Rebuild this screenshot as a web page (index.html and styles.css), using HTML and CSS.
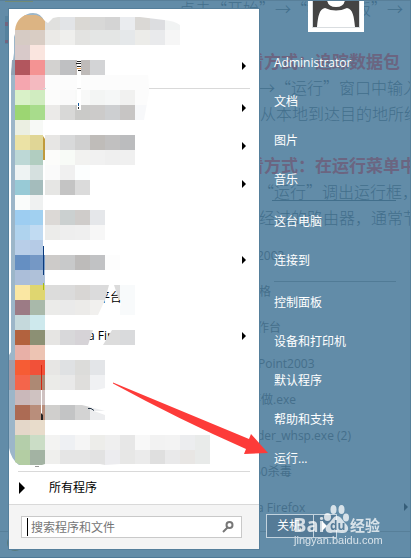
FILE: index.html
```html
<!DOCTYPE html>
<html lang="zh-CN">
<head>
<meta charset="utf-8">
<meta name="viewport" content="width=device-width, initial-scale=1">
<title>开始菜单</title>
<link rel="stylesheet" href="styles.css">
</head>
<body>
<div class="desktop">
  <svg class="backdrop" aria-hidden="true">
    <rect x="5" y="0" width="28" height="2" fill="#738b76"/>
    <g fill="#55829e"><rect x="5" y="16" width="4" height="28"/></g>
    <g fill="#73657f"><rect x="5" y="22" width="3" height="4"/><rect x="5" y="40" width="3" height="3"/></g>
    <g class="doc">
      <text x="179" y="15">点击“开始”→“控制面板”→“</text>
      <text x="259" y="94">→“运行”窗口中输入</text>
      <text x="260" y="120">从本地到达目的地所经</text>
      <text x="258" y="198">“运行”调出运行框，</text>
      <text x="259" y="224">经过的路由器，通常节</text>
      <path d="M272 200.500H396" stroke="#426f8c"/>
    </g>
    <g class="doc-heading">
      <text x="247" y="68">看方式：追踪数据包</text>
      <text x="247" y="172">看方式：在运行菜单中</text>
    </g>
    <g class="files">
      <text x="257" y="260">2003</text>
      <text x="259" y="296">格</text>
      <text x="257" y="332">作台</text>
      <text x="258" y="368">Point2003</text>
      <text x="249" y="404">不做.exe</text>
      <text x="257" y="440">der_whsp.exe (2)</text>
      <text x="254" y="476">60杀毒</text>
      <text x="257" y="512">a Firefox</text>
      <path d="M404 503l4 4-4 4z" fill="#365e79"/>
    </g>
    <path d="M0 531.500H411" stroke="#577f99"/>
    <circle cx="15" cy="543" r="8" fill="#587a7c"/>
    <g fill="#4f7994"><path d="M53 547h6v1h-6zM62 547h10v1H62zM111 547h3v1h-3zM118 547h8v1h-8zM134 547h6v1h-6zM146 547h10v1h-10z"/><path d="M204 547h9v1h-9zM216 547h7v1h-7zM226 547h8v1h-8zM237 547h8v1h-8z"/></g>
    <path d="M180.500 546v3.500h12V546" fill="none" stroke="#577f99"/>
  </svg>

  <main class="start-menu">
    <section class="programs" aria-label="程序">
      <ul class="program-list">
        <li><button class="program" aria-label="程序 1"></button></li>
        <li class="ruled"><button class="program has-menu" aria-label="程序 2"></button></li>
        <li><button class="program has-menu" aria-label="程序 3"></button></li>
        <li><button class="program has-menu" aria-label="程序 4"></button></li>
        <li><button class="program has-menu" aria-label="程序 5"></button></li>
        <li><button class="program" aria-label="程序 6"></button></li>
        <li><button class="program has-menu" aria-label="程序 7"></button></li>
        <li><button class="program name-end">平台</button></li>
        <li><button class="program has-menu name-mid">a Fir</button></li>
        <li><button class="program" aria-label="程序 10"></button></li>
        <li><button class="program" aria-label="程序 11"></button></li>
        <li><button class="program has-menu" aria-label="程序 12"></button></li>
      </ul>
      <button class="all-programs">所有程序</button>
      <form class="search">
        <label class="search-box">
          <input type="text" placeholder="搜索程序和文件" aria-label="搜索程序和文件">
          <svg width="14" height="14" viewBox="0 0 14 14" aria-hidden="true"><g fill="none" stroke="#777" stroke-width="2"><circle cx="8.500" cy="5" r="3"/><path d="M6.500 7.500l-4.500 4.500"/></g></svg>
        </label>
      </form>
    </section>

    <nav class="places" aria-label="系统">
      <svg class="avatar" viewBox="0 0 56 32" aria-hidden="true">
        <path fill="#fff" d="M0 0h56v32H0z"/>
        <path fill="#d9dde0" d="M4 0h48v28H4z"/>
        <path fill="#444" d="M5 0h46v27H5z"/>
        <path fill="#fff" d="M9 27C10 17 11 9 17 8Q28 13 39 8c6 1 7 9 8 19zM19 0q1 7 9 7t9-7z"/>
      </svg>
      <a href="#">Administrator</a>
      <a href="#">文档</a>
      <a href="#">图片</a>
      <a href="#">音乐</a>
      <a href="#" class="group">这台电脑</a>
      <a href="#">连接到</a>
      <hr>
      <a href="#">控制面板</a>
      <a href="#">设备和打印机</a>
      <a href="#">默认程序</a>
      <a href="#">帮助和支持</a>
      <a href="#">运行...</a>
      <div class="power">
        <button class="shutdown">关机</button>
        <button class="power-more" aria-label="更多选项"></button>
      </div>
    </nav>
  </main>
  <div class="taskbar"><i></i><i></i><i></i><i></i><i></i><i></i><i></i><i></i></div>

  <svg class="overlay" aria-hidden="true">
    <defs>
      <mask id="scratches" maskUnits="userSpaceOnUse" x="0" y="0" width="411" height="558">
        <path fill="#fff" d="M15 30C16 20 23 14 31 14Q41 15 45 21L48 23 53 18 58 17H140L164 20Q175 21 180 25V45H170V75H143Q149 79 149 92L143 120H135V290H210V464H120L105 465 100 464H45L42 465H20L15 462z"/>
        <path fill="#fff" d="M135 60h8q6 6 6 32l-5 28h-9z"/>
        <path d="M109 285h5l5 15h2v5l-10 10H98l7-15zM93 330h19l-9 15H88zM77 60h4v50h-4zM82 405q12 3 23 6v-8H82zM97 390h8v-2zM43 120h2v135h-2z"/>
      </mask>
    </defs>
    <path fill="#9cb6c9" d="M14 37l2-6q4-18 17-18 8 0 11 8l-4 444H19q-8-6-10-17v-93l2-3V75l3-22z"/>
    <path fill="#91a1b3" d="M12 60h3v15h-4z"/>
    <path fill="#9e9dab" d="M9 360h6v30H9z"/>
    <path fill="#fff" d="M43 45h2v387h-2z"/>
    <g id="tiles" mask="url(#scratches)"></g>
    <g fill="#222"><path d="M77 61h4v1h-4zM76 63h5v1h-5zM77 66h4v1h-4zM78 70h3v1h-3z"/><path fill="#e59b4b" d="M77 68h4v1h-4z"/><path fill="#185a9c" d="M78 103h1v3h-1z"/><path d="M78 107h1v2h-1z"/></g>
    <path d="M43 88.500h3M78 88.500h3" stroke="#d4d4d4"/>
    <path fill="#c09a3c" d="M43 136l2 3v21h-2z"/>
    <path fill="#0a3a7c" d="M43 246h1v29h-1z"/>
    <path fill="#a7bd12" d="M43 283h1v7h-1z"/>
    <path fill="#d5250f" d="M41 365h1v25h-1z"/>
    <path fill="#fff" d="M41 390h1v25h-1zM88 411h18v8H88zM240 445h6v14h-6z"/>
    <path fill="#d3d3d3" d="M82 411h8v9h-8z"/>
    <path fill="#ecedef" d="M90 411h4l11 4v5H90z"/>
    <path fill="#222" d="M41 413l2 2v5h-2z"/>
    <path d="M88 408.500q3-1 6 2" fill="none" stroke="#234"/>
    <path d="M35 466.500h4" stroke="#999"/>
    <path fill="#fd3b39" d="M113 382.500L249 439l2-5 17 19-24 1 2-5Q180 420 113 383.500z"/>
    <g class="watermark">
      <g><ellipse cx="327.500" cy="517" rx="3.500" ry="4"/><ellipse cx="333.500" cy="509.500" rx="3" ry="4.500"/><ellipse cx="341.500" cy="509.500" rx="3" ry="4.500"/><ellipse cx="346" cy="517.500" rx="3" ry="4"/><path d="M337 516c4 0 5 4 9 8 4 4 2 9-3 9-3 0-9-1-12 0-6 0-7-5-3-9 4-3 5-8 9-8z"/></g>
      <text x="293" y="532" class="logo">Bai</text>
      <text x="330" y="530" class="du">du</text>
      <text x="350" y="531" class="name">经验</text>
      <text x="294" y="544" class="site">jingyan.baidu.com</text>
    </g>
  </svg>
</div>
<script src="tiles.js"></script>
</body>
</html>
```
FILE: styles.css
```css
* { box-sizing: border-box; }
body {
  margin: 0;
  background: #628ca8;
  font: 12px/16px "Open Sans", "Noto Sans CJK SC", sans-serif;
  color: #000;
}
button, input { font: inherit; color: inherit; }
button { border: 0; background: none; padding: 0; text-align: left; }
.desktop {
  position: relative;
  overflow: hidden;
  border-top: 1px solid #587f99;
  border-right: 1px solid #557f9a;
}
.backdrop, .overlay {
  position: absolute;
  top: -1px;
  left: 0;
  width: 100%;
  height: 100%;
  pointer-events: none;
}
.doc { font: 300 16px "Noto Sans CJK SC", sans-serif; fill: #426f8c; }
.doc-heading { font: bold 17px "Noto Sans CJK SC", sans-serif; fill: #6b6581; }
.files { font: 12px "Open Sans", "Noto Sans CJK SC", sans-serif; fill: #456f8b; }

.start-menu {
  position: relative;
  display: grid;
  grid-template-columns: 250px 1fr;
  padding: 8px 0 8px 9px;
}
.programs {
  display: flex;
  flex-direction: column;
  background: #fff;
  box-shadow: 0 0 0 1px #557f9b;
}
.program-list { list-style: none; margin: 0; padding: 0 9px; }
.ruled { border-bottom: 1px solid #d9d9d9; padding-bottom: 3px; }
.program { display: flex; align-items: center; width: 100%; height: 38px; }
.name-end { padding-left: 80px; }
.name-mid { padding-left: 70px; }
.has-menu::after {
  content: "";
  margin-left: auto;
  margin-right: 4px;
  border-left: 4px solid #000;
  border-top: 4px solid transparent;
  border-bottom: 4px solid transparent;
}
.all-programs {
  display: flex;
  align-items: center;
  gap: 24px;
  height: 33px;
  margin: 2px 9px 0;
  border-top: 1px solid #d9d9d9;
}
.all-programs::before {
  content: "";
  margin-left: 1px;
  border-left: 6px solid #000;
  border-top: 6px solid transparent;
  border-bottom: 6px solid transparent;
}
.search { padding: 11px 17px 11px 12px; background: #f4f4f4; border-top: 1px solid #d9d9d9; }
.search-box {
  display: flex;
  align-items: center;
  height: 22px;
  padding: 0 6px 0 5px;
  border: 1px solid #c9c9c9;
  background: #fff;
}
.search-box input {
  flex: 1;
  min-width: 0;
  height: 18px;
  padding: 0 0 0 3px;
  border: 0;
  border-left: 1px solid #000;
  outline: 0;
  background: none;
}
.search-box input::placeholder { color: #757575; opacity: 1; }

.places { display: flex; flex-direction: column; padding: 0 14px 0 15px; }
.avatar { width: 56px; height: 32px; margin: -9px 0 11px 34px; }
.places a {
  display: flex;
  align-items: center;
  height: 39px;
  color: #fff;
  text-decoration: none;
}
.places .group { margin-top: 3px; }
.places hr { width: 100%; height: 1px; margin: 1px 0; border: 0; background: #517b96; }
.power {
  display: flex;
  width: 71px;
  height: 24px;
  margin: 36px 0 0 -8px;
  border: 1px solid #c3d3de;
  background: #557b97;
  color: #fff;
}
.shutdown { width: 46px; padding-left: 10px; }
.power-more { display: flex; flex: 1; align-items: center; padding-left: 8px; border-left: 1px solid #c3d3de; }
.power-more::before {
  content: "";
  border-left: 5px solid #fff;
  border-top: 5px solid transparent;
  border-bottom: 5px solid transparent;
}
.taskbar {
  display: grid;
  grid-template-columns: 50px 62px 51px 8px 60px 60px 60px 1fr;
  gap: 1px;
  height: 3px;
  border-top: 1px solid #4d7896;
  background: #1c3a55;
}
.taskbar i { background: #7b98ab; border-top: 1px solid #1c3a55; }
.taskbar i:nth-child(1) { background: #263745; }
.taskbar i:nth-child(2), .taskbar i:nth-child(8) { background: #3c6c92; }
.taskbar i:nth-child(3) { background: #e4e88c; }

.watermark { fill: #fff; opacity: .75; }
.logo { font: bold 20px "Open Sans", sans-serif; }
.du { font: bold 12px "Open Sans", sans-serif; fill: #557b97; }
.name { font: bold 15px "Noto Sans CJK SC", sans-serif; }
.site { font: 11px "Liberation Sans", sans-serif; }
```
FILE: tiles.js
```js
// Each row of 15px tiles starts at x = 15; rows follow each other from y = 15.
const rows = [
  "dcb483 dcb483 e0e0de e2e4e7 dad8d4 d8d8d7 d4d4d4 eaecef dad8d5 dcdde0 f1f3f3",
  "d6cbc4 d9cdc4 ebeae7 efefed e3e3e1 e4e6e5 e4e6e5 e5e8ea ecece9 e9eaec f6f6f6",
  "d8c9c9 fae5df",
  "b2565e f49393 d3d2d0 bfc0c2 bfbbb9 d3d4d6",
  "f5a6af f4bac0 fcfcfc fcfcfc fcfcfc fcfcfc fcfcfc fcfcfc fcfcfc",
  "d9f1c8 d0ecc0 fcfcfb fafafa f8f9f8 f3f5f4 f5f7f7 f1f1f0 fcfcfc",
  "9cd672 a8dc8c ebeae8 d8d8d7 cacac8 cccbca cdcfd1 c7c5c4 f7f8fa",
  "ebefe2 f7f9f6",
  "ebe2a5 e0d696 e7e6e4 d8d9da d0d0d0 bfbcb9 c1c0c0 bbbcbe",
  "bdd8d6 b1cdc0 fcfcfa f8fbf7 f2f2f0 f1f1f1 efefef f0f0f0",
  "eef3f3 d5e0df fafafa f0f0f0 fcfefe",
  "98cad6 a4bcbc e6e6e4 c4c4c4 dbdbdb",
  "fafcfb eff1f1",
  "9dcdf1 a1d0f0 dcd9d6 cbd0d0 cfccca e5e7ea",
  "afd3ee c1dbf2 ececea eeeeee efefef f7f7f7",
  "b8cee8 b5cbe6",
  "658fc2 7598c5 cdcbc9 c8c9ca bdbbba c1c2c4 fdfdfd",
  "abbed9 afc1d9",
  "fae7a3 dfd670 dcdcdb dbdbdb d8d6d4 dbdbdc dbdbdb f8fafb",
  "9c7b85 a9b9aa ebebe9 eaeaea ecebe9 f1f0ee ffffff f8fafb",
  "c5d9dc cee9ed",
  "b2623e 8c9074 e6e5e3 d8d8da d6d3d7 dcdcdc dcdcdc d9dadc",
  "e8b0a7 edc4b3",
  "f65c34 f15139 e7e6e4 dfe1e3 dcdcda e3e5e8",
  "f4654b ad8974 ebebe8 e9e9e9 dfdedc f0f1f3",
  "cab8ba cfc2c1",
  "ac6b54 b98e7b d0cfcd c3c4c5 d3d3d3 ecedef",
  "e4d7c9 e8dccb",
  "b4ceaa cbddc6 f3f3f2 eef0f3 f5f5f5 ededea efefef e7e7e7 f8f8f8 f2f2f2 f3f3f3 ecedef e9ebea",
  "b3cda3 a3b3a3 efefed e5e5e5 e5e5e5 e2e2e2 ececef e7e7e6 ebebeb dfdfdf e9e9ea e8e6e4 e8eae9"
];
const size = 15;
const group = document.getElementById("tiles");
rows.forEach((row, r) => {
  row.split(" ").forEach((color, c) => {
    const tile = document.createElementNS("http://www.w3.org/2000/svg", "rect");
    tile.setAttribute("x", size * (c + 1));
    tile.setAttribute("y", size * (r + 1));
    tile.setAttribute("width", size);
    tile.setAttribute("height", size);
    tile.setAttribute("fill", "#" + color);
    group.append(tile);
  });
});
```
